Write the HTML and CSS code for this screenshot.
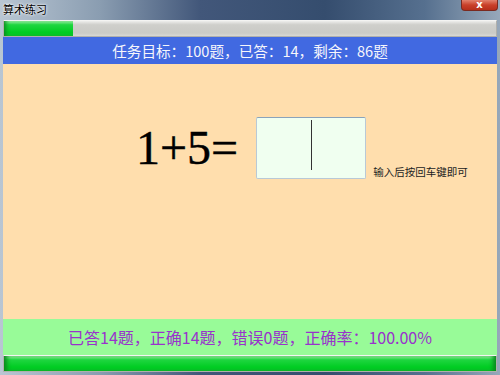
FILE: index.html
```html
<!DOCTYPE html>
<html lang="zh-CN">
<head>
  <meta charset="UTF-8" />
  <title>算术练习</title>
  <link rel="stylesheet" href="styles.css">
</head>
<body>
  <div class="window">
    <div class="titlebar">
      <span class="title">算术练习</span>
      <div class="close-btn">x</div>
    </div>

    <div class="client">
      <!-- progress of the task -->
      <div class="progress">
        <div class="progress-fill" style="width: 14%"></div>
      </div>

      <div class="task-bar">任务目标：100题，已答：14，剩余：86题</div>

      <div class="main">
        <div class="question">
          <div class="equation">1+5=</div>
          <div class="answer-box"><span class="caret"></span></div>
          <div class="hint">输入后按回车键即可</div>
        </div>
      </div>

      <div class="status-bar">已答14题，正确14题，错误0题，正确率：100.00%</div>

      <div class="progress bottom">
        <div class="progress-fill" style="width: 100%"></div>
      </div>
    </div>
  </div>
</body>
</html>
```

FILE: styles.css
```css
body {
  margin: 0;
  padding: 0;
  font-family: "Noto Sans CJK SC", "Noto Sans", sans-serif;
}

.window {
  width: 500px;
  height: 375px;
  display: flex;
  flex-direction: column;
  background: linear-gradient(to right, #b9c6d3 0%, #8a9db1 20%, #42577a 40%, #354d6e 65%, #56708f 85%, #97a8ba 100%);
  box-sizing: border-box;
  padding: 0 3px 3px 3px;
}

.titlebar {
  height: 20px;
  display: flex;
  align-items: flex-start;
  margin: 0 -3px;
}

.title {
  font-size: 11px;
  line-height: 12px;
  margin: 3px 0 0 3px;
  color: #000;
  text-shadow: 0 0 3px #fff, 0 0 2px #fff;
}

.close-btn {
  margin-left: auto;
  margin-right: 2px;
  width: 37px;
  height: 11px;
  box-sizing: border-box;
  border: 1px solid #7a2a20;
  border-top: none;
  border-radius: 0 0 4px 4px;
  background: linear-gradient(#e2826d, #c9402a 50%, #b62f1b);
  color: #fff;
  font: bold 10px/9px "DejaVu Sans", sans-serif;
  text-align: center;
}

.client {
  flex: 1;
  display: flex;
  flex-direction: column;
  background: #ffdead;
}

.progress {
  height: 17px;
  box-sizing: border-box;
  background: linear-gradient(#eeeeec, #cfcfcb 25%, #cacac6 80%, #d8d8d4);
  border: 1px solid #b0b0ac;
  border-top-color: #f4f4f2;
}

.progress-fill {
  height: 100%;
  background: linear-gradient(#9ff2a8, #1fd640 25%, #00cc22 75%, #0cc52c);
  box-shadow: inset 4px 0 4px -2px #0a8a1e;
}

.bottom .progress-fill {
  box-shadow: inset 5px 0 4px -2px #0a8a1e, inset -5px 0 4px -2px #0a8a1e;
}

.task-bar {
  height: 27px;
  background: #4169e1;
  color: #f6f6fb;
  font-size: 14.6px;
  line-height: 27px;
  text-align: center;
}

.main {
  flex: 1;
}

.question {
  display: flex;
  align-items: center;
  padding: 53px 0 0 133px;
}

.equation {
  font-family: "Liberation Serif", serif;
  font-size: 48px;
  line-height: 62px;
  color: #000;
  margin-right: 18px;
  -webkit-text-stroke: 0.4px #000;
}

.answer-box {
  width: 110px;
  height: 62px;
  box-sizing: border-box;
  background: #f0fff0;
  border: 1px solid #b9c9d6;
  border-top-color: #8aa3bb;
  border-radius: 2px;
  display: flex;
  justify-content: center;
  padding-top: 2px;
}

.caret {
  width: 1px;
  height: 50px;
  background: #333;
}

.hint {
  align-self: flex-end;
  margin-left: 7px;
  font-size: 10.5px;
  line-height: 14px;
  color: #222;
}

.status-bar {
  height: 36px;
  background: #98fb98;
  color: #9932cc;
  font-size: 16px;
  line-height: 36px;
  text-align: center;
}
```
